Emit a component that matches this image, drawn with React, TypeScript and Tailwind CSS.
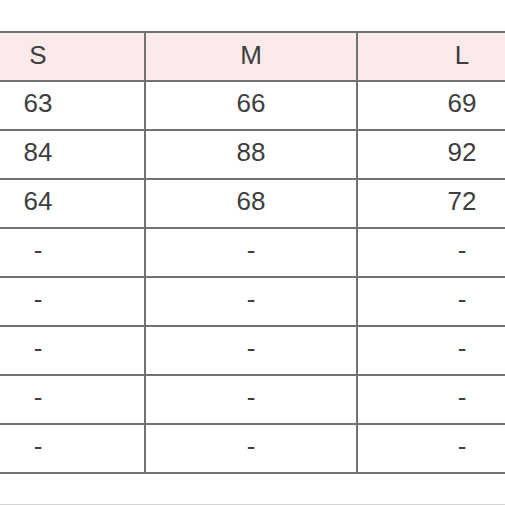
import React from 'react';

const header = ['S', 'M', 'L'];
const rows = [
  ['63', '66', '69'],
  ['84', '88', '92'],
  ['64', '68', '72'],
  ['-', '-', '-'],
  ['-', '-', '-'],
  ['-', '-', '-'],
  ['-', '-', '-'],
  ['-', '-', '-'],
];

export default function App() {
  return (
    <div className="w-[505px] h-[505px] overflow-hidden bg-white" style={{ fontFamily: '"Liberation Sans", Arial, sans-serif' }}>
      <div className="pt-[31px]">
        <div className="ml-[-70px] w-[640px] grid grid-cols-[214px_212px_210px] border-t-2 border-l-2 border-[#727272] text-[#3e3e3e] text-[26px]">
          {header.map((h) => (
            <div key={h} className="h-[49px] pb-[3px] flex items-center justify-center bg-[#fbeaea] border-r-2 border-b-2 border-[#727272]">
              {h}
            </div>
          ))}
          {rows.map((r, i) =>
            r.map((c, j) => (
              <div key={`${i}-${j}`} className="h-[49px] pb-[5px] flex items-center justify-center border-r-2 border-b-2 border-[#727272]">
                {c}
              </div>
            ))
          )}
        </div>
        <div className="mt-[30px] h-px bg-[#d4d4d4]" />
      </div>
    </div>
  );
}
